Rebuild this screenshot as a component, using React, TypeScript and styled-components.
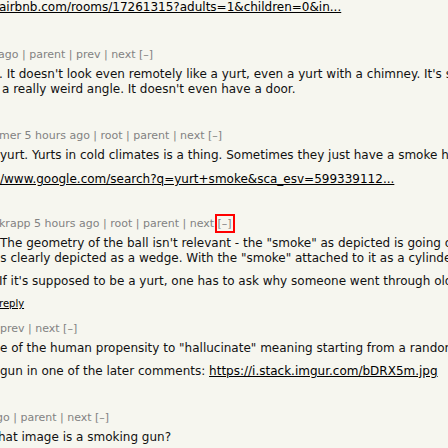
import React from 'react';
import styled, { createGlobalStyle } from 'styled-components';

const Global = createGlobalStyle`
  html, body { margin: 0; padding: 0; background: #f6f6ef; }
`;

const Page = styled.div`
  width: 448px;
  height: 448px;
  overflow: hidden;
  background: #f6f6ef;
  font-family: "DejaVu Sans", Verdana, sans-serif;
  color: #000;
`;

const Comment = styled.div<{ $top: number }>`
  margin-top: ${p => p.$top}px;
`;

const Comhead = styled.div<{ $shift?: number }>`
  font-size: 11px;
  line-height: 14px;
  color: #828282;
  white-space: nowrap;
  margin-left: ${p => p.$shift || 0}px;
`;

const Toggle = styled.span<{ $focused?: boolean }>`
  outline: ${p => (p.$focused ? '2px solid #f00' : 'none')};
  outline-offset: 1px;
`;

const Body = styled.div`
  margin-top: 5px;
`;

const Para = styled.div<{ $gap?: number }>`
  margin-top: ${p => p.$gap || 0}px;
`;

const Line = styled.div<{ $shift?: number }>`
  font-size: 12px;
  line-height: 15px;
  color: #111;
  white-space: nowrap;
  margin-left: ${p => p.$shift || 0}px;
`;

const Link = styled.span`
  color: #000;
  text-decoration: underline;
`;

const Reply = styled.div<{ $shift?: number }>`
  margin-top: 9px;
  font-size: 10px;
  line-height: 12px;
  color: #000;
  text-decoration: underline;
  margin-left: ${p => p.$shift || 0}px;
`;

type HeadProps = { text: string; shift?: number; focused?: boolean };

const Head: React.FC<HeadProps> = ({ text, shift, focused }) => (
  <Comhead $shift={shift}>
    {text}&nbsp;<Toggle $focused={focused}>[–]</Toggle>
  </Comhead>
);

export default function App() {
  return (
    <>
      <Global />
      <Page>
        <Comment $top={0}>
          <Line $shift={-1}>
            <Link>airbnb.com/rooms/17261315?adults=1&amp;children=0&amp;in...</Link>
          </Line>
        </Comment>

        <Comment $top={33}>
          <Head text="ago | parent | prev | next" shift={-2} />
          <Body>
            <Line $shift={-1}>. It doesn't look even remotely like a yurt, even a yurt with a chimney. It's so</Line>
            <Line $shift={2}>a really weird angle. It doesn't even have a door.</Line>
          </Body>
        </Comment>

        <Comment $top={32}>
          <Head text="mer 5 hours ago | root | parent | next" shift={-1} />
          <Body>
            <Line>yurt. Yurts in cold climates is a thing. Sometimes they just have a smoke hole</Line>
            <Para $gap={9}>
              <Line>
                <Link>/www.google.com/search?q=yurt+smoke&amp;sca_esv=599339112...</Link>
              </Line>
            </Para>
          </Body>
        </Comment>

        <Comment $top={30}>
          <Head text="krapp 5 hours ago | root | parent | next" shift={-1} focused />
          <Body>
            <Line>The geometry of the ball isn't relevant - the "smoke" as depicted is going out</Line>
            <Line $shift={-3}>is clearly depicted as a wedge. With the "smoke" attached to it as a cylinder</Line>
            <Para $gap={8}>
              <Line $shift={-1}>If it's supposed to be a yurt, one has to ask why someone went through old</Line>
            </Para>
          </Body>
          <Reply $shift={-1}>reply</Reply>
        </Comment>

        <Comment $top={12}>
          <Head text="prev | next" />
          <Body>
            <Line>e of the human propensity to "hallucinate" meaning starting from a random</Line>
            <Para $gap={8}>
              <Line>
                gun in one of the later comments: <Link>https://i.stack.imgur.com/bDRX5m.jpg</Link>
              </Line>
            </Para>
          </Body>
        </Comment>

        <Comment $top={32}>
          <Head text="go | parent | next" shift={-4} />
          <Body>
            <Line $shift={-2}>hat image is a smoking gun?</Line>
          </Body>
        </Comment>
      </Page>
    </>
  );
}
